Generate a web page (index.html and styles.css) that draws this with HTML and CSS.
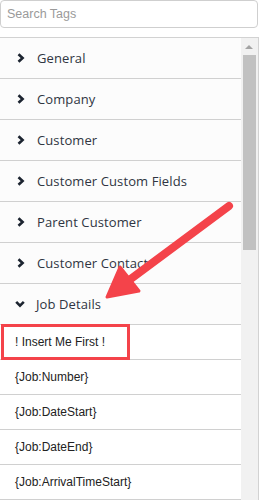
FILE: index.html
```html
<!DOCTYPE html>
<html lang="en">
<head>
    <meta charset="UTF-8">
    <meta name="viewport" content="width=device-width, initial-scale=1.0">
    <title>Tags</title>
    <link rel="stylesheet" href="styles.css">
</head>
<body>
    <div class="tag-picker">
        <input class="search" type="text" placeholder="Search Tags">

        <div class="panel">
            <div class="tag-list">
                <div class="group"><span class="chev"><svg width="8" height="10" viewBox="0 0 8 10"><path d="M1.5 1.2 L5.6 5 L1.5 8.8" fill="none" stroke="#1c2430" stroke-width="2.6"/></svg></span>General</div>
                <div class="group"><span class="chev"><svg width="8" height="10" viewBox="0 0 8 10"><path d="M1.5 1.2 L5.6 5 L1.5 8.8" fill="none" stroke="#1c2430" stroke-width="2.6"/></svg></span>Company</div>
                <div class="group"><span class="chev"><svg width="8" height="10" viewBox="0 0 8 10"><path d="M1.5 1.2 L5.6 5 L1.5 8.8" fill="none" stroke="#1c2430" stroke-width="2.6"/></svg></span>Customer</div>
                <div class="group"><span class="chev"><svg width="8" height="10" viewBox="0 0 8 10"><path d="M1.5 1.2 L5.6 5 L1.5 8.8" fill="none" stroke="#1c2430" stroke-width="2.6"/></svg></span>Customer Custom Fields</div>
                <div class="group"><span class="chev"><svg width="8" height="10" viewBox="0 0 8 10"><path d="M1.5 1.2 L5.6 5 L1.5 8.8" fill="none" stroke="#1c2430" stroke-width="2.6"/></svg></span>Parent Customer</div>
                <div class="group"><span class="chev"><svg width="8" height="10" viewBox="0 0 8 10"><path d="M1.5 1.2 L5.6 5 L1.5 8.8" fill="none" stroke="#1c2430" stroke-width="2.6"/></svg></span>Customer Contact</div>
                <div class="group open"><span class="chev"><svg width="10" height="8" viewBox="0 0 10 8"><path d="M1.2 1.8 L5 5.6 L8.8 1.8" fill="none" stroke="#1c2430" stroke-width="2.6"/></svg></span>Job Details</div>

                <div class="tag first">! Insert Me First !<span class="highlight"></span></div>
                <div class="tag">{Job:Number}</div>
                <div class="tag">{Job:DateStart}</div>
                <div class="tag">{Job:DateEnd}</div>
                <div class="tag">{Job:ArrivalTimeStart}</div>
            </div>
            <div class="scrollbar">
                <div class="scroll-up"></div>
                <div class="thumb"></div>
            </div>
        </div>

        <svg class="callout" width="259" height="500" viewBox="0 0 259 500">
            <line x1="229" y1="206" x2="128" y2="281" stroke="#f4434a" stroke-width="8" stroke-linecap="round"/>
            <polygon points="107,297 120,267 139,291" fill="#f4434a" stroke="#f4434a" stroke-width="3" stroke-linejoin="round"/>
        </svg>
    </div>
</body>
</html>
```

FILE: styles.css
```css
body {
    margin: 0;
    padding: 0;
    background-color: #fff;
    font-family: 'Open Sans', sans-serif;
    color: #2f3542;
}
.tag-picker {
    position: relative;
    width: 259px;
    height: 500px;
    overflow: hidden;
}
.search {
    display: block;
    box-sizing: border-box;
    width: 258px;
    height: 28px;
    margin: 0 0 9px 0;
    padding: 0 6px;
    border: 1px solid #cfcfcf;
    border-radius: 4px;
    font-family: 'Liberation Sans', Arial, sans-serif;
    font-size: 12.5px;
    color: #333;
    outline: none;
}
.search::placeholder {
    color: #9a9a9a;
}
.panel {
    display: flex;
    height: 463px;
    border-top: 1px solid #d2d2d2;
    border-right: 1px solid #d2d2d2;
    overflow: hidden;
}
.tag-list {
    width: 241px;
    flex: none;
}
.group {
    display: flex;
    align-items: center;
    height: 40px;
    padding-left: 17px;
    border-bottom: 1px solid #d0d0d0;
    background-color: #fcfcfc;
    font-size: 13px;
    letter-spacing: 0.1px;
    color: #2f3542;
    white-space: nowrap;
}
.chev {
    display: inline-flex;
    width: 20px;
    align-items: center;
}
.group.open {
    padding-left: 15px;
}
.group.open .chev {
    width: 21px;
}
.tag {
    position: relative;
    display: flex;
    align-items: center;
    height: 34px;
    padding-left: 15px;
    border-bottom: 1px solid #d0d0d0;
    background-color: #fff;
    font-family: 'Liberation Sans', Arial, sans-serif;
    font-size: 12px;
    color: #222;
}
.highlight {
    position: absolute;
    top: -1px;
    left: 1px;
    width: 123px;
    height: 30px;
    border: 3px solid #f4434a;
}
.scrollbar {
    position: relative;
    width: 17px;
    flex: none;
    background-color: #f1f1f1;
}
.scroll-up {
    position: absolute;
    top: 7px;
    left: 4px;
    width: 0;
    height: 0;
    border-left: 4px solid transparent;
    border-right: 4px solid transparent;
    border-bottom: 4px solid #a3a3a3;
}
.thumb {
    position: absolute;
    top: 17px;
    left: 2px;
    width: 13px;
    height: 195px;
    background-color: #c1c1c1;
}
.callout {
    position: absolute;
    top: 0;
    left: 0;
    pointer-events: none;
}
```
